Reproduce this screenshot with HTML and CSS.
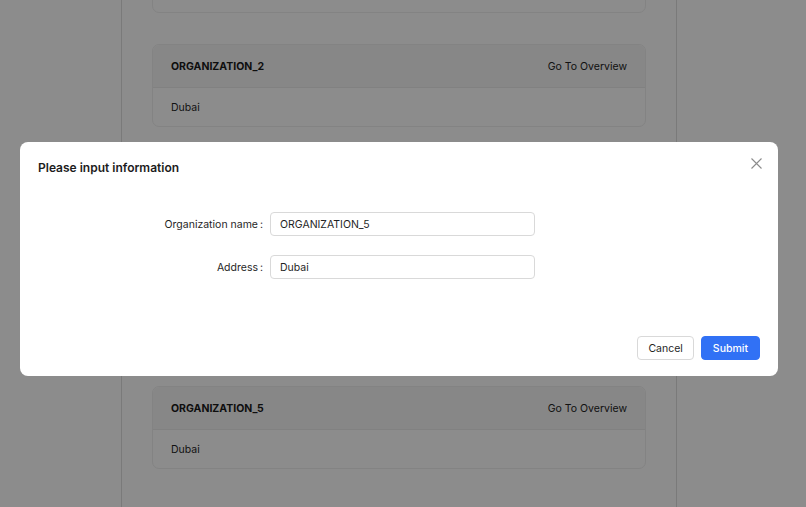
FILE: index.html
```html
<!DOCTYPE html>
<html>
<head>
<meta charset="utf-8">
<link rel="stylesheet" href="styles.css">
</head>
<body>
<div class="page">
  <div class="column">
    <div class="list">
      <div class="card">
        <div class="card-head"><span class="org">ORGANIZATION_1</span><span class="link">Go To Overview</span></div>
        <div class="card-body">Dubai</div>
      </div>
      <div class="card">
        <div class="card-head"><span class="org">ORGANIZATION_2</span><span class="link">Go To Overview</span></div>
        <div class="card-body">Dubai</div>
      </div>
      <div class="card">
        <div class="card-head"><span class="org">ORGANIZATION_3</span><span class="link">Go To Overview</span></div>
        <div class="card-body">Dubai</div>
      </div>
      <div class="card">
        <div class="card-head"><span class="org">ORGANIZATION_4</span><span class="link">Go To Overview</span></div>
        <div class="card-body">Dubai</div>
      </div>
      <div class="card">
        <div class="card-head"><span class="org">ORGANIZATION_5</span><span class="link">Go To Overview</span></div>
        <div class="card-body">Dubai</div>
      </div>
    </div>
  </div>
</div>
<div class="mask"></div>
<div class="modal">
  <div class="modal-head">
    <span class="modal-title">Please input information</span>
    <span class="close" aria-label="Close">
      <svg width="11" height="11" viewBox="0 0 11 11"><path d="M0.5 0.5 L10.5 10.5 M10.5 0.5 L0.5 10.5" stroke="#8c8c8c" stroke-width="1.1" fill="none"/></svg>
    </span>
  </div>
  <form class="form">
    <label class="label">Organization name<span class="colon">:</span></label>
    <div class="input">ORGANIZATION_5</div>
    <label class="label">Address<span class="colon">:</span></label>
    <div class="input">Dubai</div>
  </form>
  <div class="footer">
    <button type="button" class="btn">Cancel</button>
    <button type="button" class="btn primary">Submit</button>
  </div>
</div>
</body>
</html>
```
FILE: styles.css
```css
html, body {
  margin: 0;
  height: 100%;
  overflow: hidden;
}
body {
  background: #ffffff;
  font-family: Inter, "Liberation Sans", sans-serif;
  font-size: 10.5px;
  color: #1f1f1f;
}
.page {
  height: 100%;
  display: flex;
}
.column {
  margin-left: 121px;
  width: 556px;
  height: 100%;
  border-left: 1px solid #dedede;
  border-right: 1px solid #dedede;
  padding: 0 30px;
  box-sizing: border-box;
}
.list {
  margin-top: -70px;
  display: flex;
  flex-direction: column;
  gap: 31px;
}
.card {
  border: 1px solid #efefef;
  border-radius: 7px;
  overflow: hidden;
  height: 83px;
  box-sizing: border-box;
}
.card-head {
  background: #f6f6f6;
  height: 43px;
  box-sizing: border-box;
  border-bottom: 1px solid #ececec;
  display: flex;
  align-items: center;
  justify-content: space-between;
  padding: 0 18px;
}
.org {
  font-weight: 700;
  font-size: 10.5px;
  color: #1a1a1a;
}
.link {
  color: #222;
}
.card-body {
  height: 38px;
  display: flex;
  align-items: center;
  padding: 0 18px;
}
.mask {
  position: fixed;
  inset: 0;
  background: rgba(0, 0, 0, 0.45);
}
.modal {
  position: fixed;
  left: 20px;
  top: 142px;
  width: 758px;
  height: 234px;
  background: #fff;
  border-radius: 8px;
  box-sizing: border-box;
  padding: 16px 18px 16px 18px;
  display: flex;
  flex-direction: column;
}
.modal-head {
  display: flex;
  justify-content: space-between;
  align-items: center;
  height: 18px;
}
.modal-title {
  font-size: 12px;
  font-weight: 600;
  color: #1c1c1c;
}
.close {
  display: flex;
  margin-right: -2px;
  margin-top: -7px;
}
.form {
  margin-top: 36px;
  display: grid;
  grid-template-columns: 232px 265px;
  row-gap: 19px;
  align-items: center;
}
.label {
  text-align: right;
  padding-right: 7px;
  color: #1f1f1f;
}
.colon {
  margin-left: 2px;
}
.input {
  height: 24px;
  box-sizing: border-box;
  border: 1px solid #d9d9d9;
  border-radius: 4px;
  padding: 0 9px;
  display: flex;
  align-items: center;
  color: #1f1f1f;
}
.footer {
  margin-top: auto;
  display: flex;
  justify-content: flex-end;
  gap: 7px;
}
.btn {
  height: 24px;
  border: 1px solid #d9d9d9;
  border-radius: 4px;
  background: #fff;
  font-family: inherit;
  font-size: 10.5px;
  color: #1f1f1f;
  padding: 0 10px;
}
.primary {
  background: #3171f5;
  border-color: #3171f5;
  color: #fff;
  font-weight: 500;
  padding: 0 11px;
}
```
